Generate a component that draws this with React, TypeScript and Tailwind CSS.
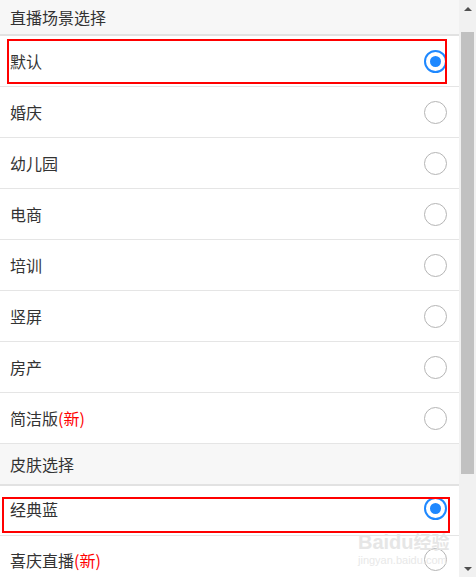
import React from "react";

const font = { fontFamily: '"Noto Sans CJK SC", "Noto Sans", sans-serif' };

function Radio({ checked }: { checked: boolean }) {
  return checked ? (
    <div className="w-[23px] h-[23px] shrink-0 rounded-full border-2 border-[#1e88ff] flex items-center justify-center bg-white">
      <div className="w-[11px] h-[11px] rounded-full bg-[#1e88ff]" />
    </div>
  ) : (
    <div className="w-[23px] h-[23px] shrink-0 rounded-full border border-[#b5b5b5] bg-white" />
  );
}

function Row({ label, isNew, checked, boxed }: { label: string; isNew?: boolean; checked?: boolean; boxed?: string }) {
  return (
    <div className="relative h-[51px] shrink-0 border-b border-[#e5e5e5] flex items-center justify-between pl-[10px] pr-[12px] bg-white">
      <span className="text-[16px] text-[#333]">
        {label}
        {isNew && <span className="text-[#f00]">(新)</span>}
      </span>
      <Radio checked={!!checked} />
      {boxed && <div className={boxed} />}
    </div>
  );
}

export default function App() {
  return (
    <div className="w-[476px] h-[577px] flex overflow-hidden bg-white" style={font}>
      <div className="w-[459px] flex flex-col overflow-hidden relative">
        <div className="h-[36px] shrink-0 bg-[#f7f7f7] border-b-2 border-[#e2e2e2] flex items-center pl-[10px] text-[16px] text-[#333]">
          直播场景选择
        </div>
        <Row label="默认" checked boxed="absolute left-[7px] right-[12px] top-[3px] bottom-[2px] border-2 border-[#f00]" />
        <Row label="婚庆" />
        <Row label="幼儿园" />
        <Row label="电商" />
        <Row label="培训" />
        <Row label="竖屏" />
        <Row label="房产" />
        <Row label="简洁版" isNew />
        <div className="h-[42px] shrink-0 bg-[#f7f7f7] border-b-2 border-[#e2e2e2] flex items-center pl-[10px] text-[16px] text-[#333]">
          皮肤选择
        </div>
        <div className="relative h-[50px] shrink-0 border-b border-[#e5e5e5] flex items-start justify-between pl-[10px] pr-[12px] pt-[11px] bg-white">
          <span className="text-[16px] text-[#333]">经典蓝</span>
          <Radio checked />
          <div className="absolute left-[2px] right-[9px] top-[11px] bottom-[2px] border-2 border-[#f00]" />
        </div>
        <div className="relative h-[51px] shrink-0 flex items-start justify-between pl-[10px] pr-[12px] pt-[12px] bg-white">
          <span className="text-[16px] text-[#333]">
            喜庆直播<span className="text-[#f00]">(新)</span>
          </span>
          <Radio checked={false} />
        </div>
        <div className="absolute left-[358px] top-[532px] text-[#e6e6e6] text-[20px] font-bold leading-none pointer-events-none" style={{ fontFamily: '"Liberation Sans", sans-serif' }}>
          Baidu<span className="text-[18px]" style={font}>经验</span>
        </div>
        <div className="absolute left-[358px] top-[555px] text-[#e8e8e8] text-[11px] leading-none pointer-events-none" style={{ fontFamily: '"Liberation Sans", sans-serif' }}>
          jingyan.baidu.com
        </div>
      </div>
      <div className="w-[17px] h-full bg-[#f1f1f1] flex flex-col items-center">
        <div className="h-[17px] w-full flex items-center justify-center">
          <div className="w-0 h-0 border-l-[4px] border-r-[4px] border-b-[4px] border-l-transparent border-r-transparent border-b-[#505050]" />
        </div>
        <div className="mt-[15px] w-[13px] h-[442px] bg-[#c1c1c1]" />
        <div className="flex-1" />
        <div className="h-[17px] w-full flex items-center justify-center">
          <div className="w-0 h-0 border-l-[4px] border-r-[4px] border-t-[4px] border-l-transparent border-r-transparent border-t-[#505050]" />
        </div>
      </div>
    </div>
  );
}
